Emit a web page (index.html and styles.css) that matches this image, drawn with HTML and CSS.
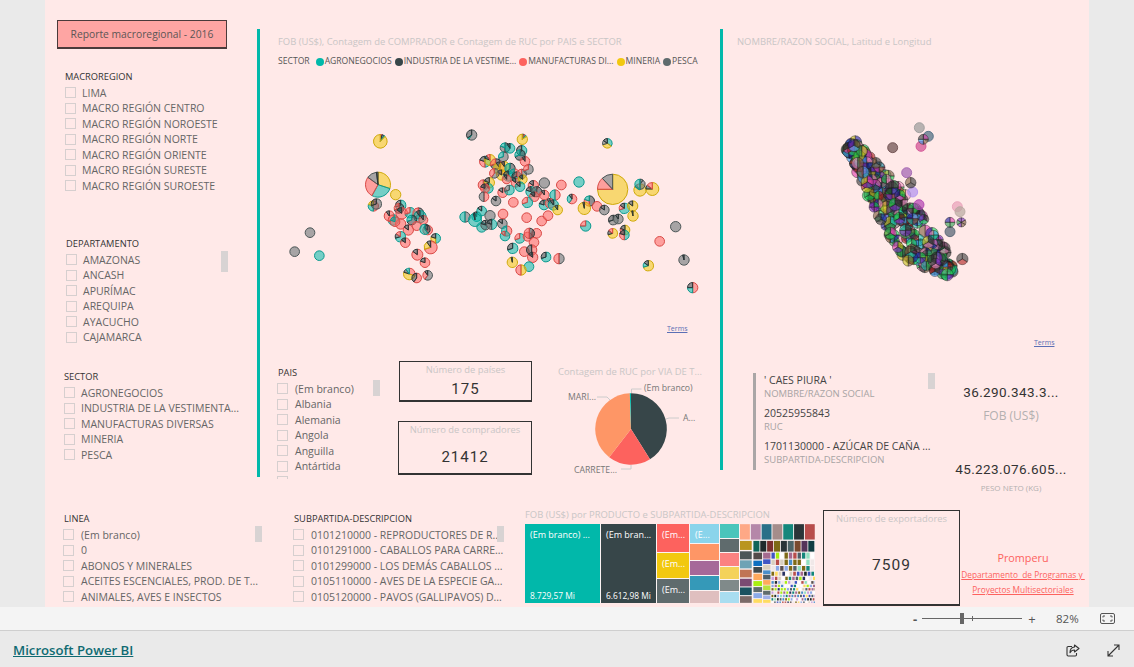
FILE: index.html
```html
<!DOCTYPE html>
<html lang="es">
<head>
    <meta charset="UTF-8">
    <title>Reporte macroregional - 2016</title>
    <link rel="stylesheet" href="styles.css">
</head>
<body>
    <div class="shell">
        <div class="stage">
            <div class="canvas">
                <div class="report-title">Reporte macroregional - 2016</div>

                <div class="slicer s-macro">
                    <div class="slicer-title">MACROREGION</div>
                    <div class="opt"><i></i>LIMA</div>
                    <div class="opt"><i></i>MACRO REGIÓN CENTRO</div>
                    <div class="opt"><i></i>MACRO REGIÓN NOROESTE</div>
                    <div class="opt"><i></i>MACRO REGIÓN NORTE</div>
                    <div class="opt"><i></i>MACRO REGIÓN ORIENTE</div>
                    <div class="opt"><i></i>MACRO REGIÓN SURESTE</div>
                    <div class="opt"><i></i>MACRO REGIÓN SUROESTE</div>
                </div>

                <div class="slicer s-depto">
                    <div class="slicer-title">DEPARTAMENTO</div>
                    <div class="opt"><i></i>AMAZONAS</div>
                    <div class="opt"><i></i>ANCASH</div>
                    <div class="opt"><i></i>APURÍMAC</div>
                    <div class="opt"><i></i>AREQUIPA</div>
                    <div class="opt"><i></i>AYACUCHO</div>
                    <div class="opt"><i></i>CAJAMARCA</div>
                    <span class="thumb"></span>
                </div>

                <div class="slicer s-sector">
                    <div class="slicer-title">SECTOR</div>
                    <div class="opt"><i></i>AGRONEGOCIOS</div>
                    <div class="opt"><i></i>INDUSTRIA DE LA VESTIMENTA...</div>
                    <div class="opt"><i></i>MANUFACTURAS DIVERSAS</div>
                    <div class="opt"><i></i>MINERIA</div>
                    <div class="opt"><i></i>PESCA</div>
                </div>

                <div class="slicer s-pais">
                    <div class="slicer-title">PAIS</div>
                    <div class="opt"><i></i>(Em branco)</div>
                    <div class="opt"><i></i>Albania</div>
                    <div class="opt"><i></i>Alemania</div>
                    <div class="opt"><i></i>Angola</div>
                    <div class="opt"><i></i>Anguilla</div>
                    <div class="opt"><i></i>Antártida</div>
                    <div class="opt"><i></i></div>
                    <span class="thumb"></span>
                </div>

                <div class="slicer s-linea">
                    <div class="slicer-title">LINEA</div>
                    <div class="opt"><i></i>(Em branco)</div>
                    <div class="opt"><i></i>0</div>
                    <div class="opt"><i></i>ABONOS Y MINERALES</div>
                    <div class="opt"><i></i>ACEITES ESCENCIALES, PROD. DE T...</div>
                    <div class="opt"><i></i>ANIMALES, AVES E INSECTOS</div>
                    <span class="thumb"></span>
                </div>

                <div class="slicer s-subpartida">
                    <div class="slicer-title">SUBPARTIDA-DESCRIPCION</div>
                    <div class="opt"><i></i>0101210000 - REPRODUCTORES DE R...</div>
                    <div class="opt"><i></i>0101291000 - CABALLOS PARA CARRE...</div>
                    <div class="opt"><i></i>0101299000 - LOS DEMÁS CABALLOS ...</div>
                    <div class="opt"><i></i>0105110000 - AVES DE LA ESPECIE GA...</div>
                    <div class="opt"><i></i>0105120000 - PAVOS (GALLIPAVOS) D...</div>
                    <span class="thumb"></span>
                </div>

                <div class="rule rule-world"></div>
                <div class="rule rule-peru"></div>
                <div class="rule-gray"></div>

                <div class="map-world">
                    <div class="visual-title">FOB (US$), Contagem de COMPRADOR e Contagem de RUC por PAIS e SECTOR</div>
                    <div class="legend">
                        <span class="legend-name">SECTOR</span>
                        <span class="legend-item"><b class="c-agro"></b>AGRONEGOCIOS</span>
                        <span class="legend-item"><b class="c-vest"></b>INDUSTRIA DE LA VESTIME...</span>
                        <span class="legend-item"><b class="c-manu"></b>MANUFACTURAS DI...</span>
                        <span class="legend-item"><b class="c-mine"></b>MINERIA</span>
                        <span class="legend-item"><b class="c-pesc"></b>PESCA</span>
                    </div>
                </div>
                <svg id="world" class="bubbles-world" viewBox="0 0 1380 960"></svg>
                <a class="terms terms-world">Terms</a>

                <div class="map-peru">
                    <div class="visual-title">NOMBRE/RAZON SOCIAL, Latitud e Longitud</div>
                </div>
                <svg id="peru" class="bubbles-peru" viewBox="0 0 1125 1020"></svg>
                <a class="terms terms-peru">Terms</a>

                <div class="card card-paises">
                    <div class="card-label">Número de países</div>
                    <div class="card-value">175</div>
                </div>
                <div class="card card-compradores">
                    <div class="card-label">Número de compradores</div>
                    <div class="card-value">21412</div>
                </div>
                <div class="card card-exportadores">
                    <div class="card-label">Número de exportadores</div>
                    <div class="card-value">7509</div>
                </div>

                <div class="pie-block">
                    <div class="visual-title">Contagem de RUC por VIA DE T...</div>
                    <svg class="pie" viewBox="0 0 160 106">
                        <path d="M73 53 L73 17.3 A35.7 35.7 0 0 1 92 83.3 Z" fill="#374649"/>
                        <path d="M73 53 L92 83.3 A35.7 35.7 0 0 1 51.2 81.3 Z" fill="#fd625e"/>
                        <path d="M73 53 L51.2 81.3 A35.7 35.7 0 0 1 71.8 17.3 Z" fill="#fe9666"/>
                        <path d="M73 53 L71.8 17.3 L73 17.3 Z" fill="#01b8aa"/>
                        <path class="leader" d="M73.500 17 V13 H83.500"/>
                        <path class="leader" d="M108 43 L111 42 H121"/>
                        <path class="leader" d="M39 21 H49 L52 24"/>
                        <path class="leader" d="M63 93 H73 V89"/>
                        <text x="86" y="15">(Em branco)</text>
                        <text x="125" y="45">A...</text>
                        <text x="10" y="24">MARI...</text>
                        <text x="16" y="97">CARRETE...</text>
                    </svg>
                </div>

                <div class="multi-card">
                    <div class="mc-value">' CAES PIURA '</div>
                    <div class="mc-label">NOMBRE/RAZON SOCIAL</div>
                    <div class="mc-value mc-next">20525955843</div>
                    <div class="mc-label">RUC</div>
                    <div class="mc-value mc-next">1701130000 - AZÚCAR DE CAÑA ...</div>
                    <div class="mc-label">SUBPARTIDA-DESCRIPCION</div>
                    <span class="thumb"></span>
                </div>

                <div class="kpi kpi-fob">
                    <div class="kpi-value">36.290.343.3...</div>
                    <div class="kpi-label">FOB (US$)</div>
                </div>
                <div class="kpi kpi-peso">
                    <div class="kpi-value">45.223.076.605...</div>
                    <div class="kpi-label kpi-small">PESO NETO (KG)</div>
                </div>

                <div class="tree-block">
                    <div class="visual-title">FOB (US$) por PRODUCTO e SUBPARTIDA-DESCRIPCION</div>
                    <div class="tree">
                        <div class="cell big c-agro">
                            <span>(Em branco) ...</span>
                            <span class="cell-value">8.729,57 Mi</span>
                        </div>
                        <div class="cell big2 c-vest">
                            <span>(Em bran...</span>
                            <span class="cell-value">6.612,98 Mi</span>
                        </div>
                        <div class="col col3">
                            <div class="cell c-manu grow-84">(Em...</div>
                            <div class="cell c-mine grow-73">(Em...</div>
                            <div class="cell c-pesc grow-71">(Em...</div>
                        </div>
                        <div class="col col4">
                            <div class="cell tone-sky grow-63">(E...</div>
                            <div class="cell tone-orange grow-49"></div>
                            <div class="cell tone-purple grow-41"></div>
                            <div class="cell tone-blue grow-37"></div>
                            <div class="cell tone-rose grow-32"></div>
                        </div>
                        <div class="col col5">
                            <div class="cell tone-aqua grow-47"></div>
                            <div class="cell tone-slate grow-40"></div>
                            <div class="cell tone-salmon grow-38"></div>
                            <div class="cell tone-gold grow-33"></div>
                            <div class="cell tone-ash grow-31"></div>
                            <div class="cell tone-ice grow-30"></div>
                        </div>
                        <svg id="tiny" class="tiny" viewBox="674 73 224 235"></svg>
                    </div>
                </div>

                <div class="credit">
                    <div class="credit-name">Promperu</div>
                    <a>Departamento&nbsp; de Programas y&nbsp;</a>
                    <a>Proyectos Multisectoriales</a>
                </div>
            </div>
        </div>

        <div class="zoombar">
            <span class="zoom-sign zoom-minus">-</span>
            <div class="slider"><span class="slider-tick"></span><span class="slider-thumb"></span></div>
            <span class="zoom-sign zoom-plus">+</span>
            <span class="zoom-pct">82%</span>
            <svg class="fit" width="15" height="11" viewBox="0 0 15 11">
                <rect x="0.5" y="0.5" width="14" height="10" rx="1.5" fill="none" stroke="#555"/>
                <path d="M3 4.5V3H5M10 3H12V4.5M12 6.5V8H10M5 8H3V6.5" fill="none" stroke="#555"/>
            </svg>
        </div>

        <div class="footer">
            <a class="brand">Microsoft Power BI</a>
            <div class="footer-icons">
                <svg width="14" height="13" viewBox="0 0 14 13">
                    <path d="M6 2.5H2.2A1.2 1.2 0 0 0 1 3.700V10.800A1.200 1.200 0 0 0 2.200 12H9.300A1.200 1.200 0 0 0 10.500 10.800V9" fill="none" stroke="#333" stroke-width="1.100"/>
                    <path d="M8.500 1L13 4.500L8.500 8V6C6.500 6 5 6.800 4 8.800C4 5.800 5.800 3.300 8.500 3Z" fill="none" stroke="#333" stroke-width="1.100" stroke-linejoin="round"/>
                </svg>
                <svg width="13" height="13" viewBox="0 0 13 13">
                    <path d="M1 12L12 1M7 1H12V6M1 7V12H6" fill="none" stroke="#333" stroke-width="1.100"/>
                </svg>
            </div>
        </div>
    </div>
    <script src="charts.js"></script>
</body>
</html>
```

FILE: styles.css
```css
* {
    margin: 0;
    padding: 0;
    box-sizing: border-box;
}
body {
    background: #eaeaea;
    font-family: "Open Sans", "Liberation Sans", sans-serif;
    overflow: hidden;
}
.shell {
    display: flex;
    flex-direction: column;
    height: 667px;
}
.stage {
    height: 607px;
    padding-left: 45px;
    overflow: hidden;
}

/* the report page is a free canvas, visuals sit where the author dropped them */
.canvas {
    position: relative;
    width: 1044px;
    height: 607px;
    background: #ffe9e8;
    overflow: hidden;
}
.report-title {
    position: absolute;
    left: 12px;
    top: 20px;
    width: 170px;
    height: 29px;
    background: #fea5a3;
    border: 1px solid #4a3a3a;
    border-bottom-width: 2px;
    color: #5c5555;
    font-size: 10.300px;
    line-height: 26px;
    text-align: center;
}

.slicer {
    position: absolute;
    width: 190px;
    color: #666;
    font-size: 10.500px;
}
.slicer-title {
    color: #333;
    font-size: 9.300px;
    line-height: 14px;
    margin-top: 1px;
    margin-bottom: 1px;
}
.opt {
    display: flex;
    align-items: center;
    height: 15.500px;
    white-space: nowrap;
}
.opt i {
    flex: none;
    width: 11px;
    height: 11px;
    margin-right: 6px;
    border: 1px solid #d6cfcf;
}
.thumb {
    position: absolute;
    width: 7px;
    height: 21px;
    background: #d8d3d3;
}
.s-macro { left: 20px; top: 69px; }
.s-depto { left: 21px; top: 236px; height: 110px; }
.s-depto .thumb { left: 155px; top: 15px; }
.s-sector { left: 19px; top: 369px; }
.s-pais { left: 232px; top: 365px; width: 105px; height: 114px; overflow: hidden; }
.s-pais .thumb { left: 96px; top: 15px; height: 16px; }
.s-linea { left: 18px; top: 511px; }
.s-linea .thumb { left: 192px; top: 15px; height: 16px; }
.s-subpartida { left: 248px; top: 511px; width: 212px; }
.s-subpartida .thumb { left: 204px; top: 15px; height: 16px; }
.s-pais .slicer-title, .s-linea .slicer-title, .s-subpartida .slicer-title { margin-left: 1px; }
.s-pais .opt i, .s-linea .opt i, .s-subpartida .opt i { margin-right: 7px; }
.s-subpartida .opt { overflow: hidden; }

.rule {
    position: absolute;
    width: 3px;
    background: #01b8aa;
}
.rule-world { left: 212px; top: 29px; height: 448px; }
.rule-peru { left: 675px; top: 29px; height: 441px; }
.rule-gray {
    position: absolute;
    left: 708px;
    top: 373px;
    width: 3px;
    height: 97px;
    background: #aaa6a6;
}

.visual-title {
    color: #c9c6c6;
    font-size: 9.450px;
    line-height: 13px;
    white-space: nowrap;
}
.map-world { position: absolute; left: 233px; top: 35px; }
.map-peru { position: absolute; left: 692px; top: 35px; }
.legend {
    display: flex;
    align-items: center;
    gap: 3px;
    margin-top: 7px;
    color: #555;
    font-size: 8.600px;
    line-height: 13px;
    white-space: nowrap;
}
.legend-name { margin-right: 3px; }
.legend-item {
    display: flex;
    align-items: center;
    gap: 1px;
}
.legend-item b {
    width: 8px;
    height: 8px;
    border-radius: 50%;
}
.c-agro { background: #01b8aa; }
.c-vest { background: #374649; }
.c-manu { background: #fd625e; }
.c-mine { background: #f2c80f; }
.c-pesc { background: #5f6b6d; }

.bubbles-world {
    position: absolute;
    left: 210px;
    top: 20px;
    width: 460px;
    height: 320px;
}
.bubbles-peru {
    position: absolute;
    left: 670px;
    top: 20px;
    width: 375px;
    height: 340px;
}
.terms {
    position: absolute;
    color: #5b6fb5;
    font-size: 7px;
    line-height: 9px;
    text-decoration: underline;
}
.terms-world { left: 622px; top: 324px; }
.terms-peru { left: 989px; top: 338px; }

.card {
    position: absolute;
    display: flex;
    flex-direction: column;
    align-items: center;
    border: 1px solid #333;
    border-bottom-width: 2px;
}
.card-label {
    color: #c9c6c6;
    font-size: 9.400px;
    line-height: 13px;
    white-space: nowrap;
}
.card-value {
    color: #333;
    font-family: Roboto, "Liberation Sans", sans-serif;
    font-size: 15px;
    letter-spacing: 1px;
}
.card-paises { left: 354px; top: 361px; width: 133px; height: 41px; padding-top: 1px; }
.card-paises .card-value { margin-top: 4px; }
.card-compradores { left: 353px; top: 421px; width: 134px; height: 54px; padding-top: 1px; }
.card-compradores .card-value { margin-top: 12px; }
.card-exportadores { left: 778px; top: 510px; width: 137px; height: 96px; padding-top: 1px; }
.card-exportadores .card-value { margin-top: 31px; font-size: 15.500px; }

.pie-block { position: absolute; left: 513px; top: 365px; }
.pie {
    display: block;
    width: 160px;
    height: 106px;
    margin-top: -2px;
}
.pie text {
    fill: #777;
    font-size: 8.700px;
}
.leader {
    fill: none;
    stroke: #ccc;
}

.multi-card {
    position: absolute;
    left: 719px;
    top: 373px;
    width: 171px;
    font-size: 10.500px;
    white-space: nowrap;
}
.mc-value {
    color: #444;
    line-height: 14px;
}
.mc-next { margin-top: 5px; }
.mc-label {
    color: #a8a4a4;
    font-size: 9.500px;
    line-height: 14px;
}
.multi-card .thumb { left: 164px; top: 0; height: 16px; }

.kpi {
    position: absolute;
    left: 906px;
    width: 120px;
    text-align: center;
    white-space: nowrap;
}
.kpi-value {
    color: #333;
    font-family: Roboto, "Liberation Sans", sans-serif;
    font-size: 13.500px;
    line-height: 16px;
    letter-spacing: 0.400px;
}
.kpi-label {
    margin-top: 8px;
    color: #b3b0b0;
    font-size: 12px;
    line-height: 16px;
}
.kpi-small {
    margin-top: 5px;
    font-size: 8px;
    line-height: 12px;
}
.kpi-fob { top: 384px; }
.kpi-peso { top: 461px; }

.tree-block { position: absolute; left: 480px; top: 508px; }
.tree {
    display: flex;
    gap: 1px;
    width: 290px;
    height: 79px;
    margin-top: 3px;
    background: #fbf3f3;
}
.cell {
    display: flex;
    flex-direction: column;
    justify-content: space-between;
    padding: 4px 0 1px 5px;
    color: #fff;
    font-size: 9px;
    line-height: 13px;
    white-space: nowrap;
    overflow: hidden;
}
.cell-value { font-size: 8.400px; }
.big { flex: none; width: 75px; }
.big2 { flex: none; width: 55px; }
.col {
    display: flex;
    flex: none;
    flex-direction: column;
    gap: 1px;
}
.col3 { width: 32px; }
.col4 { width: 29px; }
.col5 { width: 19px; }
.tiny { flex: none; width: 75px; height: 79px; }
.grow-84 { flex: 84; }
.grow-73 { flex: 73; }
.grow-71 { flex: 71; }
.grow-63 { flex: 63; }
.grow-49 { flex: 49; }
.grow-47 { flex: 47; }
.grow-41 { flex: 41; }
.grow-40 { flex: 40; }
.grow-38 { flex: 38; }
.grow-37 { flex: 37; }
.grow-33 { flex: 33; }
.grow-32 { flex: 32; }
.grow-31 { flex: 31; }
.grow-30 { flex: 30; }
.tone-sky { background: #8ad4eb; }
.tone-orange { background: #fe9666; }
.tone-purple { background: #a66999; }
.tone-blue { background: #3599b8; }
.tone-rose { background: #dfbfbf; }
.tone-aqua { background: #4ac5bb; }
.tone-slate { background: #5f6b6d; }
.tone-salmon { background: #fb8281; }
.tone-gold { background: #f4d25a; }
.tone-ash { background: #808a8a; }
.tone-ice { background: #a9ddf0; }

.credit {
    position: absolute;
    left: 903px;
    top: 550px;
    width: 150px;
    color: #fd625e;
    font-size: 8.300px;
    line-height: 15px;
    text-align: center;
}
.credit-name {
    margin-bottom: 1px;
    font-size: 10.800px;
    line-height: 16px;
}
.credit a {
    display: block;
    text-decoration: underline;
}

.zoombar {
    display: flex;
    align-items: center;
    height: 24px;
    padding-left: 910px;
    background: #f4f4f4;
    border-bottom: 1px solid #cfcfcf;
    color: #555;
}
.zoom-sign {
    width: 10px;
    font-size: 13px;
    text-align: center;
}
.zoom-minus { margin-right: 2px; font-weight: 700; }
.zoom-plus { margin-left: 5px; }
.slider {
    position: relative;
    width: 100px;
    height: 1px;
    background: #666;
}
.slider-tick {
    position: absolute;
    left: 50px;
    top: -2px;
    width: 1px;
    height: 5px;
    background: #666;
}
.slider-thumb {
    position: absolute;
    left: 38px;
    top: -5px;
    width: 4px;
    height: 11px;
    background: #666;
}
.zoom-pct {
    margin-left: 19px;
    font-size: 11.500px;
}
.fit { margin-left: 21px; }

.footer {
    display: flex;
    flex: 1;
    align-items: center;
    justify-content: space-between;
    padding: 2px 14px 0 13px;
    background: #eaeaea;
}
.brand {
    color: #0f6a72;
    font-size: 13.200px;
    font-weight: 600;
    text-decoration: underline;
}
.footer-icons {
    display: flex;
    align-items: center;
    gap: 27px;
}
```

FILE: charts.js
```js
var NS = "http://www.w3.org/2000/svg";
var COLORS = { A: "#01b8aa", D: "#374649", R: "#fd625e", Y: "#f2c80f", G: "#5f6b6d" };
var EDGES = { A: "#0c9a8f", D: "#2a3436", R: "#d94a47", Y: "#cfa90a", G: "#4c5657" };

// x, y, r and the slices, in the units of the svg viewBox
var WORLD = [
    [376,364,19,"R4D5A3Y88"],[650,345,14,"G60A5D35"],[802,358,14,"D6R4A5Y85"],[1057,370,13,"A35Y35G15D15"],
    [750,383,13,"D50G30A20"],[765,385,13,"A90D10"],[800,392,14,"A60D40"],[795,405,14,"D70A30"],[810,424,13,"R90D10"],
    [745,410,13,"G70A30"],[690,425,15,"A50R30D20"],[705,420,15,"Y80D10R10"],[722,432,14,"D70R30"],[735,445,18,"R60Y30D10"],
    [748,440,14,"Y90D10"],[765,445,14,"D60A40"],[740,465,14,"Y85D15"],[760,468,14,"A80D20"],[778,462,14,"R60A40"],
    [785,470,13,"A70D30"],[800,462,13,"G60R40"],[820,448,13,"G70R30"],[718,460,13,"G60R40"],[755,478,12,"R90D10"],
    [782,488,12,"R85D15"],[803,478,12,"Y85D15"],[685,495,14,"G50R50"],[703,488,14,"Y80D20"],[700,505,13,"A90D10"],
    [690,505,12,"R80D20"],[795,500,13,"A85D15"],[687,530,13,"R50G50"],[743,518,13,"R85D15"],[763,510,13,"A70G30"],
    [835,497,14,"R85D15"],[868,489,14,"G"],[919,495,13,"R"],[972,486,14,"A"],[828,515,14,"A80D20"],[845,515,14,"D60G40"],
    [838,530,13,"R85D15"],[868,525,13,"R90D10"],[900,525,14,"R50A50"],[723,543,13,"G85D15"],[775,547,13,"R"],
    [817,547,14,"A70R30"],[867,555,13,"A80D20"],[885,550,13,"R90D10"],[895,555,14,"A90D10"],[908,570,13,"Y90D10"],
    [951,537,13,"R60A30D10"],[1003,543,14,"D50R30A20"],[988,565,17,"Y96D4"],[1026,559,13,"R"],[1048,570,13,"G85D15"],
    [1155,510,17,"Y85D5R10"],[1192,507,18,"Y75D10R15"],[1155,493,14,"D10G40A50"],[1108,565,14,"A70R15D15"],[1133,558,14,"Y85D15"],
    [1134,588,14,"Y96D4"],[1075,600,13,"G70D30"],[1090,597,13,"G90D10"],[992,618,14,"A75R25"],[1073,640,13,"Y70D15R15"],
    [1110,630,13,"Y50R30D20"],[1108,645,13,"A50R30D20"],[1262,620,14,"G"],[1214,664,13,"R"],[1287,720,14,"G96D4"],
    [1180,737,14,"Y70A15D15"],[1313,803,14,"R50A25D25"],
    [422,524,14,"Y"],[355,558,14,"R50A30Y20"],[364,552,14,"G70D30"],[165,638,13,"G"],[119,695,13,"G"],[193,707,13,"A"],
    [437,556,14,"A70D30"],[432,565,13,"D70R30"],[403,588,14,"R90D10"],[415,600,14,"A70R30"],[440,580,16,"R85D15"],
    [465,578,14,"A70R30"],[490,580,15,"D60R40"],[495,590,17,"A90D10"],[470,600,13,"D70A30"],[505,600,12,"R90D10"],
    [437,612,14,"R"],[460,630,14,"R85D15"],[420,605,13,"R80A20"],[485,618,12,"R"],[518,630,13,"R85D15"],[510,628,14,"D40A60"],
    [436,650,14,"A70D15R15"],[451,668,13,"R85D15"],[542,655,13,"A50Y30D20"],[527,682,18,"R70Y20D10"],[487,704,15,"R85D15"],
    [510,728,13,"R80D20"],[463,762,16,"R30Y50D10A10"],[485,774,13,"R60D40"],[518,766,13,"G60R30D10"],
    [630,591,14,"G50A50"],[680,573,13,"A85D15"],[665,590,13,"A90D10"],[660,600,18,"A96D4"],[680,622,13,"A"],[705,587,14,"G"],
    [692,615,13,"G80D20"],[710,613,14,"A50G30D20"],[742,611,13,"G85D15"],[744,582,13,"R"],[815,593,13,"R"],[860,603,13,"R"],
    [879,587,13,"R"],[755,633,14,"R60A40"],[750,648,13,"A85R15"],[794,655,13,"A70R30"],[818,650,12,"R"],[845,640,13,"R"],
    [823,640,14,"D50R50"],[837,667,13,"R"],[773,685,14,"A70D30"],[808,695,13,"R"],[830,690,14,"R50D50"],[833,712,14,"R85D15"],
    [873,711,13,"A70D30"],[912,716,14,"G50R50"],[772,727,14,"Y96D4"],[822,740,13,"A"],[798,750,14,"Y50R50"],
    [369,494,36,"Y30A28R27G13D2"],[1073,508,44,"Y75R13G12"]
];

var seed = 11;
function rnd() {
    seed = (seed * 16807) % 2147483647;
    return seed / 2147483647;
}

function add(svg, tag, attrs) {
    var el = document.createElementNS(NS, tag);
    for (var k in attrs) {
        el.setAttribute(k, attrs[k]);
    }
    svg.appendChild(el);
    return el;
}

function wedge(x, y, r, a, b) {
    var x1 = x + r * Math.sin(a), y1 = y - r * Math.cos(a);
    var x2 = x + r * Math.sin(b), y2 = y - r * Math.cos(b);
    var big = b - a > Math.PI ? 1 : 0;
    return "M" + x + " " + y + "L" + x1 + " " + y1 + "A" + r + " " + r + " 0 " + big + " 1 " + x2 + " " + y2 + "Z";
}

function pie(svg, x, y, r, slices, look) {
    var total = 0;
    slices.forEach(function (s) { total += s.v; });
    var a = 0;
    slices.forEach(function (s) {
        var attrs = { fill: s.c, "fill-opacity": look.fill, stroke: s.e, "stroke-width": look.line, "stroke-opacity": look.edge };
        if (slices.length == 1) {
            attrs.cx = x;
            attrs.cy = y;
            attrs.r = r;
            add(svg, "circle", attrs);
            return;
        }
        var b = a + s.v / total * Math.PI * 2;
        attrs.d = wedge(x, y, r, a, b);
        add(svg, "path", attrs);
        a = b;
    });
}

// mapa mundial
var world = document.getElementById("world");
WORLD.forEach(function (b) {
    var slices = [];
    b[3].match(/[A-Z]\d*/g).forEach(function (p) {
        slices.push({ c: COLORS[p[0]], e: EDGES[p[0]], v: parseInt(p.slice(1)) || 100 });
    });
    pie(world, b[0], b[1], b[2] + 1.500, slices, { fill: 0.55, line: 3, edge: 1 });
});

// mapa de empresas, the cloud along the coast is random but seeded
var peru = document.getElementById("peru");
var TONES = ["#17c84a", "#7b2fc0", "#e040b0", "#2020a0", "#20e060", "#b02020", "#20c0b0", "#c8c020", "#404040", "#f090c0", "#40a0f0", "#806040", "#2a2a2a", "#30a050", "#3a3a3a"];
var COAST = [[408,372],[450,440],[510,525],[560,610],[630,690],[708,760]];
var WIDTH = [20,32,48,62,60,14];
var PERU_LOOK = { fill: 0.62, line: 1.800, edge: 0.7 };

function randomPie(x, y, r, n) {
    var slices = [];
    for (var i = 0; i < n; i++) {
        slices.push({ c: TONES[Math.floor(rnd() * TONES.length)], e: "#1a1a1a", v: 1 });
    }
    pie(peru, x, y, r, slices, PERU_LOOK);
}

for (var i = 0; i < 320; i++) {
    var t = rnd() * (COAST.length - 1);
    var k = Math.min(Math.floor(t), COAST.length - 2);
    var f = t - k;
    var px = COAST[k][0] + (COAST[k + 1][0] - COAST[k][0]) * f;
    var py = COAST[k][1] + (COAST[k + 1][1] - COAST[k][1]) * f;
    var w = WIDTH[k] + (WIDTH[k + 1] - WIDTH[k]) * f;
    var off = (rnd() * 2 - 1) * w;
    randomPie(px + off * 0.78, py - off * 0.62, 14 + rnd() * 5, 2 + Math.floor(rnd() * 3));
}

var OUTLIERS = [
    [613,323,"#9a9a9a"],[640,349,"#4a6a80"],[618,379,"#d04a90"],[533,383,"#6a4a4a"],[593,516,"#b090f0"],
    [612,554,"#b040b0"],[727,560,"#e8a0b8"],[735,575,"#b8a8a0"],[575,458,"#a060b0"],[705,635,"#506070"]
];
OUTLIERS.forEach(function (o) {
    pie(peru, o[0], o[1], 15, [{ c: o[2], e: o[2], v: 1 }], { fill: 0.7, line: 2.500, edge: 1 });
});
randomPie(625, 358, 15, 4);
randomPie(587, 488, 16, 3);
randomPie(739, 607, 14, 6);
randomPie(705, 607, 15, 4);
randomPie(742, 717, 17, 3);

// trozos pequeños del treemap
var tiny = document.getElementById("tiny");
var SMALL = ["#5a5050", "#a56a8f", "#3f55c4", "#d8cfc0", "#4a8fca", "#4f5f68", "#a8ef10", "#ffdc60", "#1f2a2c", "#8caae8", "#7e6a16", "#b84d4b", "#14877b", "#c8a0e0", "#283060", "#ffffff", "#ffffff", "#90e0c0", "#f0e8e8"];

function rect(x, y, w, h, c) {
    add(tiny, "rect", { x: x, y: y, width: w, height: h, fill: c });
}
function column(x, w, cells) {
    cells.forEach(function (c) {
        rect(x, c[0], w, c[1] - c[0], c[2]);
    });
}
["#fea886", "#b587a9", "#2a7088", "#a58d8b", "#14877b", "#2b3538", "#b84d4b"].forEach(function (c, i) {
    rect(674 + i * 32.300, 73, 29.500, 46, c);
});
["#0e6458", "#1f2a2c", "#7b2f2f", "#7e6a16", "#2a3438", "#4d6468", "#7a4a2f", "#55345a", "#103d42"].forEach(function (c, i) {
    rect(714 + i * 20.500, 123, 18, 32, c);
});
column(674, 35, [[123,150,"#b9951f"],[154,178,"#4c5658"],[181,205,"#6ea3b5"],[209,232,"#c07555"],[236,259,"#7b4a72"],[262,285,"#1a5260"],[288,308,"#7b6a68"]]);
column(714, 26, [[158,178,"#534a4a"],[182,198,"#0e6fc0"],[201,218,"#404a4d"],[221,240,"#ffa95c"],[243,258,"#a8ef10"],[261,276,"#5f6b6d"],[279,294,"#8caae8"],[297,308,"#ffdc60"]]);
column(743, 22, [[158,176,"#a56a8f"],[178,192,"#3f55c4"],[194,209,"#d8cfc0"],[211,222,"#4a8fca"],[224,238,"#4f5f68"],[240,254,"#ffa95c"],[256,270,"#b8e040"],[272,284,"#5f6b6d"],[286,297,"#a0b0e8"],[299,308,"#ffdc60"]]);

var yy = 158, hh = 18;
while (yy < 308) {
    var xx = 768, cw = yy < 210 ? 10 : 8 - (yy - 210) / 30;
    while (xx < 898) {
        var pick = SMALL[Math.floor(rnd() * SMALL.length)];
        rect(xx, yy, Math.min(cw, 898 - xx), Math.min(hh, 308 - yy), pick);
        xx += cw + 3;
    }
    yy += hh + 3;
    hh = Math.max(7, hh - 2);
}
```
